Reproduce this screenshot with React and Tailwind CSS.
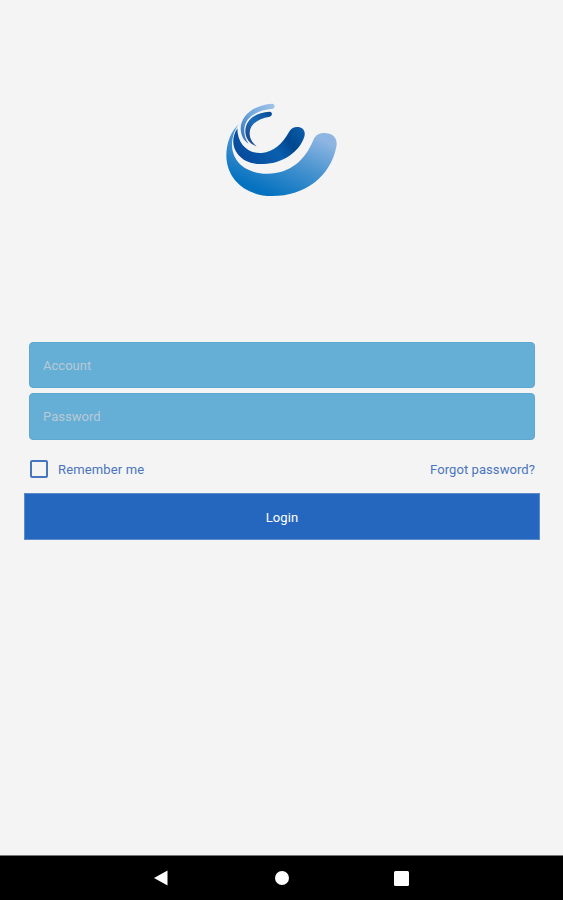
import React, { useState } from 'react';

const Logo = () => (
  <svg viewBox="0 0 390 330" className="h-[110px] w-[130px]" role="img" aria-label="Logo">
    <defs>
      <linearGradient id="outer" x1="0.85" y1="0.2" x2="0.35" y2="0.95">
        <stop offset="0" stopColor="#8fb6e2" />
        <stop offset="0.45" stopColor="#4a94d0" />
        <stop offset="1" stopColor="#0572c0" />
      </linearGradient>
      <linearGradient id="middle" x1="0" y1="0.6" x2="1" y2="0.2">
        <stop offset="0" stopColor="#084a9c" />
        <stop offset="0.5" stopColor="#0a5fae" />
        <stop offset="0.75" stopColor="#00478f" />
        <stop offset="1" stopColor="#0a5ba8" />
      </linearGradient>
      <linearGradient id="light" x1="1" y1="0" x2="0" y2="1">
        <stop offset="0" stopColor="#a3c4ea" />
        <stop offset="0.5" stopColor="#6ea6dc" />
        <stop offset="1" stopColor="#2b6cb5" />
      </linearGradient>
      <linearGradient id="dark" x1="1" y1="0" x2="0" y2="1">
        <stop offset="0" stopColor="#064a96" />
        <stop offset="0.5" stopColor="#1c6cb8" />
        <stop offset="1" stopColor="#1b3f80" />
      </linearGradient>
    </defs>
    <path
      fill="url(#outer)"
      d="M69 90C44 112 31 148 31 187C33 256 88 306 168 306C268 306 344 246 361 158C366 132 350 117 325 117C308 117 298 124 292 138C268 198 222 240 152 239C92 238 49 206 48 153C48 128 57 106 69 90Z"
    />
    <path
      fill="url(#middle)"
      d="M64 103C48 128 47 157 65 180C83 203 111 212 143 210C199 208 250 174 265 128C270 110 259 99 244 99C232 99 225 104 219 114C201 148 174 173 137 177C94 180 64 148 64 103Z"
    />
    <path
      fill="url(#light)"
      d="M169 29C112 33 74 65 74 104C75 125 83 139 98 149C87 135 84 120 85 104C88 70 122 48 169 44C178 43 178 30 169 29Z"
    />
    <path
      fill="url(#dark)"
      d="M161 53C115 56 88 80 88 113C89 134 101 149 122 157C109 147 101 133 101 117C102 90 126 74 161 68C170 66 170 54 161 53Z"
    />
  </svg>
);

const NavigationBar = () => (
  <div className="flex h-[45px] items-center border-t border-[#777777] bg-black px-[100px]">
    <button className="flex flex-1 justify-center" aria-label="Back">
      <svg viewBox="0 0 14 16" className="h-4 w-3.5 fill-white">
        <path d="M13.5 0.4V15.6L0 8Z" />
      </svg>
    </button>
    <button className="flex flex-1 justify-center" aria-label="Home">
      <span className="size-3.5 rounded-full bg-white" />
    </button>
    <button className="flex flex-1 justify-center" aria-label="Recent apps">
      <span className="mr-0.5 size-[15px] rounded-[1.5px] bg-white" />
    </button>
  </div>
);

const inputClass =
  'block w-full rounded-[4px] border border-[#5ba9d1] bg-[#65afd7] px-[13px] text-[13px] tracking-[0.03px] text-white outline-none placeholder:text-[#b9c9d4]';

const App = () => {
  const [account, setAccount] = useState('');
  const [password, setPassword] = useState('');
  const [remember, setRemember] = useState(false);

  return (
    <div className="flex h-screen flex-col bg-[#f4f4f4] font-['Roboto',sans-serif] text-[13px]">
      <div className="flex justify-center pt-[94px] pr-px">
        <Logo />
      </div>

      <form className="mt-[138px] pr-[23px] pl-6" onSubmit={e => e.preventDefault()}>
        <div className="flex flex-col gap-[5px] pr-[5px] pl-[5px]">
          <input
            type="text"
            value={account}
            onChange={e => setAccount(e.target.value)}
            placeholder="Account"
            className={`${inputClass} h-[46px]`}
          />
          <input
            type="password"
            value={password}
            onChange={e => setPassword(e.target.value)}
            placeholder="Password"
            className={`${inputClass} h-[47px]`}
          />
        </div>

        <div className="mt-5 flex h-[18px] items-center justify-between pr-[5px] pl-1.5 tracking-[0.15px] text-[#4a74bd]">
          <label className="flex items-center gap-2.5">
            <input
              type="checkbox"
              checked={remember}
              onChange={e => setRemember(e.target.checked)}
              className="size-[18px] appearance-none rounded-[2px] border-2 border-[#4676bd] checked:bg-[#4676bd]"
            />
            <span className="pt-px">Remember me</span>
          </label>
          <a href="#forgot" className="pt-px tracking-[0.08px]">
            Forgot password?
          </a>
        </div>

        <button
          type="submit"
          className="mt-[15px] h-[47px] w-full border border-[#5b8bcb] bg-[#2567be] pt-0.5 text-[13px] tracking-[0.1px] text-white"
        >
          Login
        </button>
      </form>

      <div className="mt-auto">
        <NavigationBar />
      </div>
    </div>
  );
};

export default App;
